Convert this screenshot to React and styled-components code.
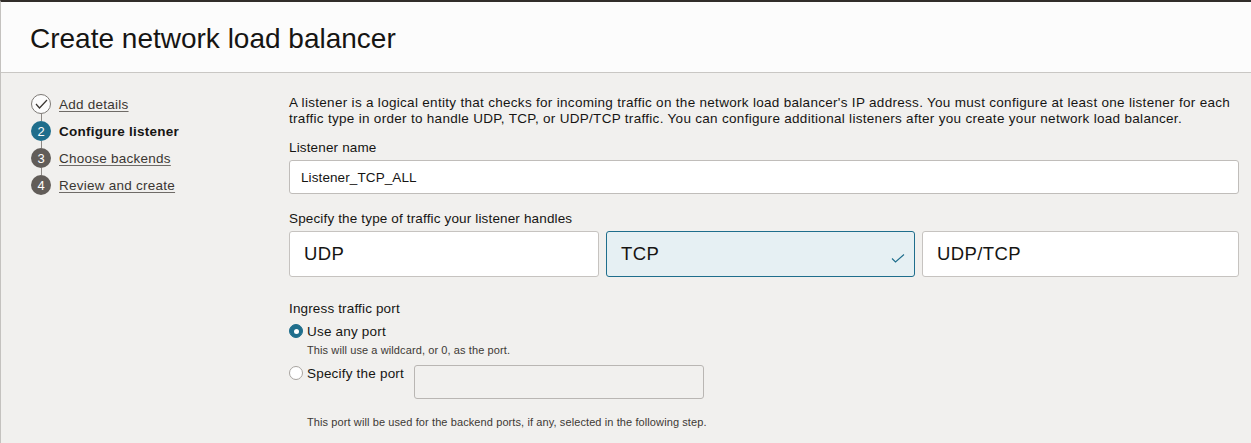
import React from "react";
import styled, { createGlobalStyle } from "styled-components";

const Global = createGlobalStyle`
  html, body { margin: 0; padding: 0; background: #f1f0ee; }
  body { font-family: "Liberation Sans", Arial, sans-serif; color: #161513; }
  * { box-sizing: border-box; }
`;

const Page = styled.div`
  width: 1251px;
  height: 443px;
  overflow: hidden;
  border-top: 2px solid #312d2a;
  border-left: 1px solid #c4c2bf;
  background: #f1f0ee;
`;

const Header = styled.header`
  height: 71px;
  background: #fcfcfc;
  border-bottom: 1px solid #c9c7c4;
  display: flex;
  align-items: center;
  padding-left: 29px;
  padding-top: 3px;
`;

const Title = styled.h1`
  margin: 0;
  font-size: 28px;
  font-weight: 400;
  letter-spacing: 0px;
  color: #161513;
`;

const Body = styled.div`
  display: grid;
  grid-template-columns: 258px 1fr;
  padding: 21px 12px 0 30px;
`;

const StepList = styled.nav`
  display: flex;
  flex-direction: column;
`;

const Step = styled.div`
  display: flex;
  align-items: center;
  gap: 8px;
  height: 20px;
`;

const Connector = styled.div`
  width: 1px;
  height: 7px;
  margin-left: 10px;
  background: #8c8884;
`;

const Marker = styled.span`
  width: 20px;
  height: 20px;
  border-radius: 50%;
  display: inline-flex;
  align-items: center;
  justify-content: center;
  font-size: 13px;
  color: #fff;
  flex: none;
  background: ${(p) =>
    p.$state === "done" ? "#fcfcfc" : p.$state === "current" ? "#1f6e8c" : "#625d59"};
  border: ${(p) => (p.$state === "done" ? "1px solid #7d7975" : "none")};
`;

const StepLabel = styled.span`
  font-size: 13.5px;
  letter-spacing: 0.25px;
  color: ${(p) => (p.$current ? "#161513" : "#3a3632")};
  font-weight: ${(p) => (p.$current ? 700 : 400)};
  text-decoration: ${(p) => (p.$current ? "none" : "underline")};
  text-underline-offset: 2px;
  text-decoration-color: #6f6b67;
`;

const Content = styled.main`
  display: flex;
  flex-direction: column;
  padding-top: 1px;
`;

const Description = styled.p`
  margin: 0;
  font-size: 13.5px;
  letter-spacing: 0.3px;
  line-height: 16px;
  color: #161513;
`;

const FieldLabel = styled.label`
  display: block;
  font-size: 13.5px;
  letter-spacing: 0.15px;
  line-height: 16px;
  color: #161513;
  margin-top: ${(p) => p.$mt || 0}px;
  margin-bottom: ${(p) => p.$mb || 0}px;
`;

const TextInput = styled.div`
  height: 34px;
  background: #fff;
  border: 1px solid #c0bdba;
  border-radius: 3px;
  display: flex;
  align-items: center;
  padding-left: 11px;
  font-size: 13.5px;
  letter-spacing: 0.1px;
  color: #161513;
`;

const CardRow = styled.div`
  display: grid;
  grid-template-columns: 310px 309px 1fr;
  gap: 7px;
`;

const Card = styled.div`
  position: relative;
  height: 46px;
  border-radius: 3px;
  display: flex;
  align-items: center;
  padding-left: 14px;
  font-size: 18.5px;
  letter-spacing: 0.4px;
  color: #161513;
  background: ${(p) => (p.$selected ? "#e6f0f3" : "#fff")};
  border: 1px solid ${(p) => (p.$selected ? "#1f6e8c" : "#c6c3c0")};
`;

const CheckMark = styled.svg`
  position: absolute;
  right: 9px;
  bottom: 13px;
`;

const RadioRow = styled.div`
  display: flex;
  align-items: flex-start;
  margin-top: ${(p) => p.$mt || 0}px;
`;

const RadioOption = styled.label`
  display: flex;
  align-items: center;
  gap: 4px;
  height: 16px;
  font-size: 13.5px;
  letter-spacing: 0.2px;
  color: #161513;
`;

const RadioDot = styled.span`
  width: 14px;
  height: 14px;
  border-radius: 50%;
  flex: none;
  display: inline-flex;
  align-items: center;
  justify-content: center;
  background: ${(p) => (p.$checked ? "#1f6e8c" : "#fff")};
  border: 1px solid ${(p) => (p.$checked ? "#1f6e8c" : "#a8a4a0")};
  &::after {
    content: "";
    width: 5px;
    height: 5px;
    border-radius: 50%;
    background: ${(p) => (p.$checked ? "#fff" : "transparent")};
  }
`;

const Hint = styled.div`
  font-size: 11px;
  letter-spacing: 0.1px;
  line-height: 14px;
  color: #3d3935;
  padding-left: 18px;
  margin-top: ${(p) => p.$mt || 0}px;
`;

const PortInput = styled.div`
  width: 290px;
  height: 34px;
  margin-left: 10px;
  background: #f1f0ee;
  border: 1px solid #b9b6b3;
  border-radius: 3px;
`;

const steps = [
  { n: 1, label: "Add details", state: "done" },
  { n: 2, label: "Configure listener", state: "current" },
  { n: 3, label: "Choose backends", state: "todo" },
  { n: 4, label: "Review and create", state: "todo" },
];

export default function App() {
  return (
    <>
      <Global />
      <Page>
        <Header>
          <Title>Create network load balancer</Title>
        </Header>
        <Body>
          <StepList>
            {steps.map((s, i) => (
              <React.Fragment key={s.n}>
                {i > 0 && <Connector />}
                <Step>
                  <Marker $state={s.state}>
                    {s.state === "done" ? (
                      <svg width="13" height="10" viewBox="0 0 13 10">
                        <polyline points="1,5 4.5,9 12,1" fill="none" stroke="#3a3632" strokeWidth="1.2" />
                      </svg>
                    ) : (
                      s.n
                    )}
                  </Marker>
                  <StepLabel $current={s.state === "current"}>{s.label}</StepLabel>
                </Step>
              </React.Fragment>
            ))}
          </StepList>
          <Content>
            <Description>
              A listener is a logical entity that checks for incoming traffic on the network load balancer's IP
              address. You must configure at least one listener for each traffic type in order to handle UDP, TCP,
              or UDP/TCP traffic. You can configure additional listeners after you create your network load
              balancer.
            </Description>
            <FieldLabel $mt={13} $mb={4}>Listener name</FieldLabel>
            <TextInput>Listener_TCP_ALL</TextInput>
            <FieldLabel $mt={17} $mb={4}>Specify the type of traffic your listener handles</FieldLabel>
            <CardRow>
              <Card>UDP</Card>
              <Card $selected>
                TCP
                <CheckMark width="14" height="9" viewBox="0 0 14 9">
                  <polyline points="1,4.5 4.5,8 13,0.5" fill="none" stroke="#1f6e8c" strokeWidth="1.1" />
                </CheckMark>
              </Card>
              <Card>UDP/TCP</Card>
            </CardRow>
            <FieldLabel $mt={24}>Ingress traffic port</FieldLabel>
            <RadioRow $mt={6}>
              <RadioOption>
                <RadioDot $checked />
                Use any port
              </RadioOption>
            </RadioRow>
            <Hint $mt={4}>This will use a wildcard, or 0, as the port.</Hint>
            <RadioRow $mt={8}>
              <RadioOption>
                <RadioDot />
                Specify the port
              </RadioOption>
              <PortInput />
            </RadioRow>
            <Hint $mt={16}>This port will be used for the backend ports, if any, selected in the following step.</Hint>
          </Content>
        </Body>
      </Page>
    </>
  );
}
